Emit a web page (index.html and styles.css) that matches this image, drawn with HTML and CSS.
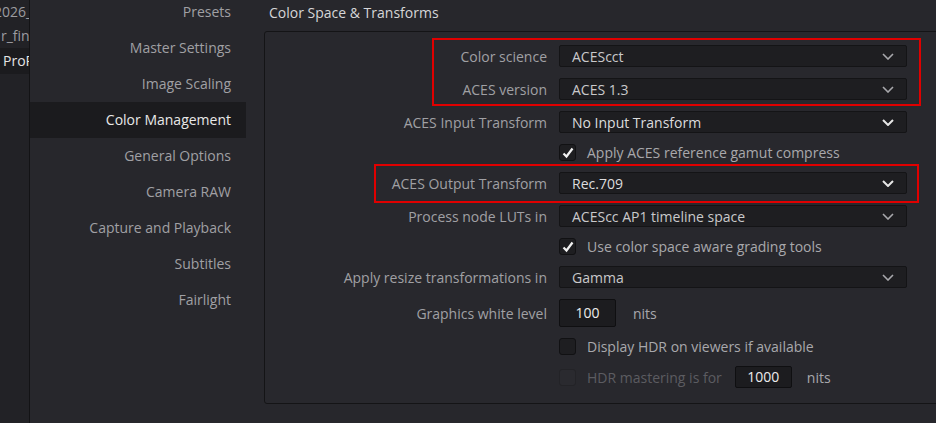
FILE: index.html
```html
<!DOCTYPE html>
<html lang="en">
<head>
  <meta charset="UTF-8">
  <title>Project Settings - Color Management</title>
  <link rel="stylesheet" href="styles.css">
</head>
<body>
  <div class="app">
    <!-- project list, cut off on the left -->
    <div class="strip">
      <p class="strip-item shift">2026_</p>
      <p class="strip-item">r_fin</p>
      <p class="strip-item on">ProRes</p>
    </div>

    <ul class="nav">
      <li>Presets</li>
      <li>Master Settings</li>
      <li>Image Scaling</li>
      <li class="active">Color Management</li>
      <li>General Options</li>
      <li>Camera RAW</li>
      <li>Capture and Playback</li>
      <li>Subtitles</li>
      <li>Fairlight</li>
    </ul>

    <div class="main">
      <h2 class="title">Color Space &amp; Transforms</h2>
      <div class="panel">
        <div class="form">
          <label class="lbl">Color science</label>
          <div class="select"><span>ACEScct</span><svg class="chev" viewBox="0 0 12 7"><path d="M1 1l5 5 5-5"/></svg></div>

          <label class="lbl">ACES version</label>
          <div class="select"><span>ACES 1.3</span><svg class="chev" viewBox="0 0 12 7"><path d="M1 1l5 5 5-5"/></svg></div>

          <label class="lbl">ACES Input Transform</label>
          <div class="select bright"><span>No Input Transform</span><svg class="chev" viewBox="0 0 12 7"><path d="M1 1l5 5 5-5"/></svg></div>

          <span></span>
          <div class="check-row"><span class="box"><svg viewBox="0 0 14 14"><path d="M2.5 7.5l3 3 6-8"/></svg></span>Apply ACES reference gamut compress</div>

          <label class="lbl">ACES Output Transform</label>
          <div class="select bright"><span>Rec.709</span><svg class="chev" viewBox="0 0 12 7"><path d="M1 1l5 5 5-5"/></svg></div>

          <label class="lbl">Process node LUTs in</label>
          <div class="select"><span>ACEScc AP1 timeline space</span><svg class="chev" viewBox="0 0 12 7"><path d="M1 1l5 5 5-5"/></svg></div>

          <span></span>
          <div class="check-row"><span class="box"><svg viewBox="0 0 14 14"><path d="M2.5 7.5l3 3 6-8"/></svg></span>Use color space aware grading tools</div>

          <label class="lbl">Apply resize transformations in</label>
          <div class="select"><span>Gamma</span><svg class="chev" viewBox="0 0 12 7"><path d="M1 1l5 5 5-5"/></svg></div>

          <label class="lbl">Graphics white level</label>
          <div class="num-row"><span class="num">100</span><span class="unit">nits</span></div>

          <span></span>
          <div class="check-row"><span class="box"></span>Display HDR on viewers if available</div>

          <span></span>
          <div class="check-row off"><span class="box"></span>HDR mastering is for<span class="num small">1000</span><span class="unit">nits</span></div>
        </div>

        <!-- review marks -->
        <div class="mark mark1"></div>
        <div class="mark mark2"></div>
      </div>
    </div>
  </div>
</body>
</html>
```

FILE: styles.css
```css
*{
  margin: 0;
  padding: 0;
  box-sizing: border-box;
}
body{
  background: #27272c;
  font-family: "Open Sans", "Noto Sans", sans-serif;
  font-size: 14px;
  color: #a2a2a6;
  overflow: hidden;
}
.app{
  display: flex;
  width: 936px;
  height: 423px;
  overflow: hidden;
}

/* left project strip */
.strip{
  width: 30px;
  flex: none;
  background: #222226;
  border-right: 1px solid #131315;
  overflow: hidden;
}
.strip-item{
  height: 24px;
  line-height: 24px;
  white-space: nowrap;
  color: #9c9ca0;
  padding-left: 1px;
}
.strip-item.shift{
  margin-left: -7px;
}
.strip-item.on{
  background: #1b1b1e;
  color: #e4e4e4;
  padding-left: 3px;
  height: 26px;
  line-height: 26px;
}

/* settings nav */
.nav{
  list-style: none;
  width: 216px;
  flex: none;
  margin-top: -6px;
}
.nav li{
  height: 36px;
  line-height: 36px;
  text-align: right;
  padding-right: 15px;
  color: #a0a0a4;
}
.nav li.active{
  background: #1b1b1e;
  color: #e8e8e8;
}

/* main */
.main{
  flex: 1;
  padding-left: 18px;
}
.title{
  font-size: 14px;
  font-weight: normal;
  color: #d6d6d8;
  height: 31px;
  line-height: 26px;
  padding-left: 5px;
}
.panel{
  position: relative;
  width: 720px;
  height: 373px;
  border: 1px solid #141416;
  border-radius: 3px;
  background: #28282d;
}
.form{
  display: grid;
  grid-template-columns: 282px 348px;
  column-gap: 12px;
  row-gap: 11px;
  padding-top: 13px;
  align-items: center;
}
.lbl{
  text-align: right;
  white-space: nowrap;
  color: #a0a0a4;
}
.select{
  height: 22px;
  display: flex;
  align-items: center;
  justify-content: space-between;
  background: #1e1e21;
  border: 1px solid #141416;
  border-radius: 2px;
  padding: 0 12px 0 12px;
  color: #c9c9cb;
}
.select.bright{
  color: #dcdcde;
}
.chev{
  width: 12px;
  height: 7px;
  fill: none;
  stroke: #a8a8ac;
  stroke-width: 1.6;
}
.bright .chev{
  stroke: #e6e6e6;
  stroke-width: 2;
}
.check-row{
  height: 17px;
  display: flex;
  align-items: center;
  white-space: nowrap;
  color: #a8a8ac;
}
.box{
  width: 17px;
  height: 17px;
  flex: none;
  background: #1e1e21;
  border: 1px solid #111113;
  border-radius: 3px;
  margin-right: 11px;
  display: flex;
  align-items: center;
  justify-content: center;
}
.box svg{
  width: 14px;
  height: 14px;
  fill: none;
  stroke: #f2f2f2;
  stroke-width: 2.2;
}
.check-row.off{
  color: #5c5c61;
  height: 22px;
}
.check-row.off .box{
  background: #2a2a2f;
  border-color: #232327;
}
.num-row{
  display: flex;
  align-items: center;
}
.num{
  width: 57px;
  height: 28px;
  line-height: 26px;
  text-align: center;
  background: #1c1c1f;
  border: 1px solid #0f0f11;
  border-radius: 2px;
  color: #ececec;
}
.num.small{
  height: 22px;
  line-height: 20px;
  margin-left: 13px;
}
.unit{
  margin-left: 17px;
  color: #a8a8ac;
}
.off .unit{
  margin-left: 15px;
}

/* red review marks */
.mark{
  position: absolute;
  border: 2px solid #e00000;
}
.mark1{
  left: 167px;
  top: 6px;
  width: 489px;
  height: 68px;
}
.mark2{
  left: 109px;
  top: 132px;
  width: 545px;
  height: 39px;
}
```
